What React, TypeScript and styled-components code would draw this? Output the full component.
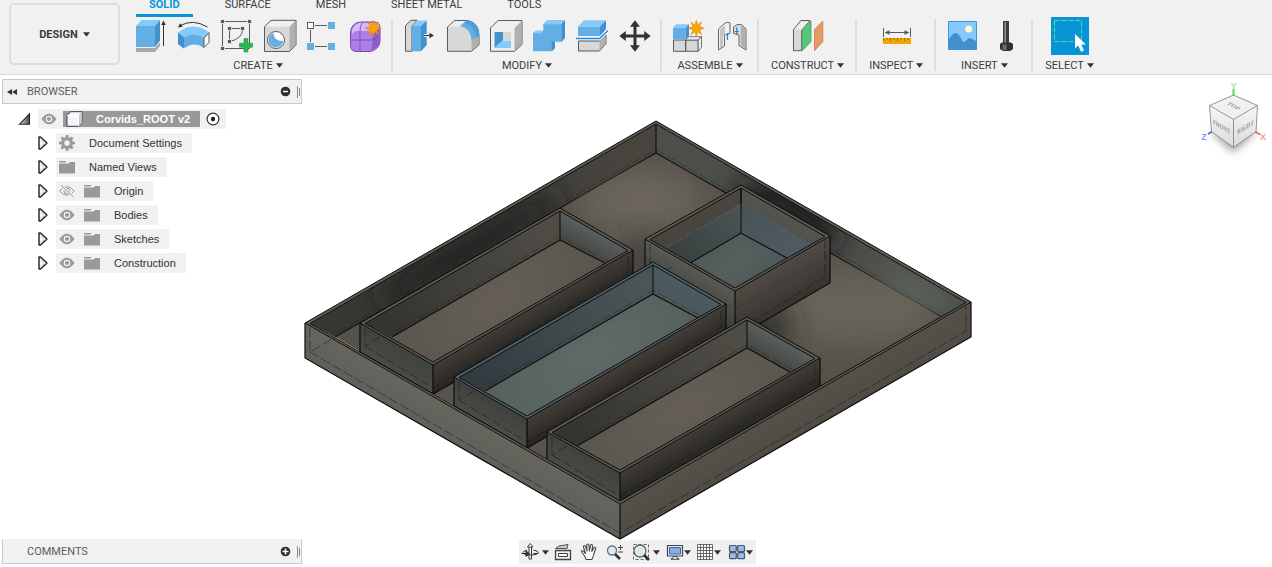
import React from 'react';
import styled, { createGlobalStyle } from 'styled-components';

const GlobalStyle = createGlobalStyle`
  *, *::before, *::after { box-sizing: border-box; }
  html, body { margin: 0; padding: 0; background: #fff; }
  body { font-family: Roboto, "Liberation Sans", sans-serif; font-size: 11px; color: #3c3c3c; }
  button { font: inherit; color: inherit; background: none; border: 0; padding: 0; margin: 0; cursor: pointer; }
  svg { display: block; flex: none; }
  ul { list-style: none; margin: 0; padding: 0; }
`;

/* ---------- layout ---------- */

const Page = styled.div`
  min-height: 100vh;
  display: flex;
  flex-direction: column;
`;

const Ribbon = styled.header`
  display: flex;
  background: #f1f1f1;
  border-bottom: 1px solid #d9d9d9;
`;

const WorkspaceButton = styled.button`
  display: flex;
  align-items: center;
  justify-content: center;
  gap: 5px;
  width: 111px;
  margin: 3px 4px 9px 9px;
  border: 2px solid #dddddd;
  border-radius: 5px;
  font-weight: 700;
`;

const RibbonBody = styled.div`
  flex: 1;
  min-width: 0;
`;

const Tabs = styled.nav`
  display: flex;
  gap: 19px;
  height: 17px;
  padding-left: 12px;
`;

const Tab = styled.button<{ $active?: boolean }>`
  height: 17px;
  padding: 0 13px 4px;
  line-height: 10px;
  white-space: nowrap;
  font-weight: ${p => (p.$active ? 700 : 400)};
  color: ${p => (p.$active ? '#0696d7' : '#3c3c3c')};
  border-bottom: 3px solid ${p => (p.$active ? '#0696d7' : 'transparent')};
`;

const ToolRow = styled.div`
  display: flex;
`;

const Divider = styled.span`
  width: 2px;
  margin: 2px 0 3px;
  background: #dddddd;
`;

const Group = styled.section`
  display: flex;
  flex-direction: column;
  align-items: center;
  padding: 0 4px 0 5px;
`;

const Tools = styled.div`
  display: flex;
`;

const ToolButton = styled.button`
  width: 43px;
  height: 38px;
`;

const GroupLabel = styled.button`
  display: flex;
  align-items: center;
  gap: 3px;
  height: 19px;
  padding: 1px 7px 0;
  white-space: nowrap;
`;

const Workspace = styled.main`
  flex: 1;
  display: grid;
  grid-template-columns: 304px minmax(0, 1fr) 300px;
`;

const SideColumn = styled.aside`
  display: flex;
  flex-direction: column;
  justify-content: space-between;
  padding: 4px 2px 3px;
`;

const Stage = styled.section`
  display: flex;
  flex-direction: column;
  align-items: center;
  justify-content: flex-end;
  padding-bottom: 3px;
`;

const CubeColumn = styled.aside`
  display: flex;
  justify-content: flex-end;
  align-items: flex-start;
  padding: 4px 4px 0 0;
`;

const ModelSvg = styled.svg`
  width: 100%;
  height: auto;
`;

/* ---------- panels ---------- */

const PanelBar = styled.div<{ $open?: boolean }>`
  display: flex;
  align-items: center;
  height: 25px;
  padding: 0 0 0 3px;
  background: #f1f1f1;
  border: 1px solid #c8c8c8;
  border-top-color: ${p => (p.$open ? '#c8c8c8' : '#f1f1f1')};
`;

const PanelTitle = styled.h2`
  flex: 1;
  margin: 0 0 0 21px;
  font-size: 11px;
  font-weight: 400;
  line-height: 23px;
  color: #5c5c5c;
`;

const CollapseButton = styled.button`
  width: 12px;
  height: 12px;
  & + ${PanelTitle} { margin-left: 9px; }
`;

const RoundButton = styled.button`
  width: 11px;
  height: 11px;
  margin-right: 6px;
`;

const Grip = styled.span`
  width: 4px;
  height: 12px;
  border-left: 1px solid #8a8a8a;
  display: flex;
  justify-content: center;
  align-items: center;
  &::after { content: ""; width: 1px; height: 8px; background: #8a8a8a; }
`;

const Tree = styled.ul`
  display: flex;
  flex-direction: column;
  gap: 4px;
  padding-top: 5px;
  font-family: "Liberation Sans", Arial, sans-serif;
  color: #333;
`;

const Row = styled.li<{ $level: number }>`
  display: flex;
  align-items: center;
  height: 20px;
  padding-left: ${p => 16 + p.$level * 18}px;
`;

const Expander = styled.button`
  width: 14px;
  height: 14px;
  margin-right: 6px;
`;

const RowBody = styled.div`
  display: flex;
  align-items: center;
  gap: 9px;
  height: 20px;
  padding: 0 10px 0 3px;
  background: #f1f1f1;
`;

const RowName = styled.span`
  padding-left: 5px;
  line-height: 20px;
  white-space: nowrap;
`;

const RootBody = styled(RowBody)`
  gap: 6px;
  padding-right: 6px;
`;

const RootName = styled.span`
  display: flex;
  align-items: center;
  gap: 13px;
  height: 16px;
  padding: 0 10px 0 3px;
  background: #989898;
  color: #fff;
  font-weight: 700;
  white-space: nowrap;
`;

const IconButton = styled.button`
  width: 16px;
  height: 16px;
`;

const NavBar = styled.div`
  display: flex;
  height: 24px;
  margin-right: 2px;
  background: #f0f0f0;
`;

const NavButton = styled.button<{ $width: number; $gap?: number }>`
  display: flex;
  align-items: center;
  justify-content: center;
  gap: ${p => p.$gap ?? 0}px;
  width: ${p => p.$width}px;
`;

/* ---------- small glyphs ---------- */

const Caret = () => (
  <svg width="7" height="5" viewBox="0 0 7 5" aria-hidden="true">
    <path d="M0 .3h7L3.500 4.700z" fill="#333" />
  </svg>
);

const Rewind = () => (
  <svg width="12" height="12" viewBox="0 0 12 12"><path d="M6 3v6L1 6zM11 3v6L6 6z" fill="#333" /></svg>
);

const Round = ({ plus }: { plus?: boolean }) => (
  <svg width="11" height="11" viewBox="0 0 11 11">
    <circle cx="5.500" cy="5.500" r="4.800" fill="#2e2e2e" />
    <path d={plus ? 'M2.500 5.500h6M5.500 2.500v6' : 'M3 5.500h5'} stroke="#fff" strokeWidth="1.500" />
  </svg>
);

const Closed = () => (
  <svg width="14" height="14" viewBox="0 0 14 14">
    <path d="M4.500 1h1.500l6.500 6-6.500 6h-1.500z" transform="translate(-1.500 0)" fill="#f4f4f4" stroke="#222" strokeWidth="1.400" strokeLinejoin="round" />
    <path d="M5 3.500l3.500 3.500-3.500 3.500" fill="none" stroke="#bbb" strokeWidth=".7" />
  </svg>
);

const Opened = () => (
  <svg width="14" height="14" viewBox="0 0 14 14">
    <defs>
      <linearGradient id="expander-shade" x1="0" x2="1"><stop offset="0" stopColor="#eee" /><stop offset="1" stopColor="#444" /></linearGradient>
    </defs>
    <path d="M1.500 12.300L11.500 1.800v10.500z" fill="url(#expander-shade)" stroke="#222" strokeWidth="1.100" />
  </svg>
);

const Eye = ({ off }: { off?: boolean }) => (
  <svg width="16" height="16" viewBox="0 0 16 16">
    {off ? (
      <g fill="none" stroke="#9a9a9a">
        <path d="M.8 8Q8 -.6 15.200 8 8 16.600 .8 8z" />
        <circle cx="8" cy="8" r="3" />
        <circle cx="8" cy="8" r="1" />
        <path d="M2.500 2.500l12 11.500" stroke="#f1f1f1" strokeWidth="2.500" />
        <path d="M2 2l12.500 12" />
      </g>
    ) : (
      <g>
        <path d="M.4 8Q8 -2.500 15.600 8 8 18.500 .4 8z" fill="#9a9a9a" />
        <circle cx="8" cy="8" r="2.700" fill="none" stroke="#f1f1f1" strokeWidth="1.200" />
      </g>
    )}
  </svg>
);

const Folder = () => (
  <svg width="16" height="16" viewBox="0 0 16 16">
    <path d="M0 4.500h9.500l1.500-1.500h5V14.500H0z" fill="#999" />
    <path d="M0 2h7.500l-1 1.500H0z" fill="#999" />
  </svg>
);

const Gear = () => (
  <svg width="16" height="16" viewBox="0 0 16 16">
    <circle cx="8" cy="8" r="4.300" fill="none" stroke="#9a9a9a" strokeWidth="3.200" />
    {[0, 45, 90, 135, 180, 225, 270, 315].map(a => (
      <path key={a} d="M6.400 3L6.800 0h2.400l.4 3z" fill="#9a9a9a" transform={`rotate(${a} 8 8)`} />
    ))}
  </svg>
);

const BodyCube = () => (
  <svg width="17" height="16" viewBox="0 0 17 16">
    <path d="M1 4.500L4.500 .7H16v10.800L12.500 15.300H1z" fill="#f4f6fa" stroke="#444" strokeLinejoin="round" />
    <path d="M12.500 4.500L16 .7v10.800l-3.500 3.800z" fill="#c3c8d0" />
    <path d="M1 4.500h11.500v10.500" fill="none" stroke="#fff" />
  </svg>
);

const ActiveDot = () => (
  <svg width="14" height="14" viewBox="0 0 14 14">
    <circle cx="7" cy="7" r="5.900" fill="#fff" stroke="#333" strokeWidth="1.200" />
    <circle cx="7" cy="7" r="2.200" fill="#222" />
  </svg>
);

/* ---------- ribbon icons, drawn in a 43 x 38 cell ---------- */

const B1 = '#64aee6';
const B2 = '#86c9fb';
const B3 = '#4390cc';
const G1 = '#d8d8d8';
const G2 = '#efefef';
const G3 = '#b0b0b0';
const LN = '#5a5a5a';

const Star = () => (
  <path
    fill="#f9a300"
    stroke="#e58a00"
    strokeWidth=".6"
    d="M29.300 3.300L30.700 8 34.600 5 32.500 9.500 37.300 11.300 32.500 13 34.600 17.500 30.700 14.700 29.300 19.300 27.900 14.700 23.900 17.500 26.100 13 21.300 11.300 26.100 9.500 23.900 5 27.900 8z"
  />
);

const icons: Record<string, React.ReactNode> = {
  Extrude: (
    <>
      <path d="M7 31h19l5-6v4l-5 6H7z" fill="#a9a9a9" />
      <path d="M7 9h19v21H7z" fill={B1} />
      <path d="M7 9l5.500-6H31l-5 6z" fill={B2} />
      <path d="M31 3v20.500L26 30V9z" fill={B3} />
      <path d="M34.500 29V6" stroke="#333" />
      <path d="M32.200 8l2.300-4.500L36.800 8z" fill="#333" />
    </>
  ),
  Revolve: (
    <>
      <path d="M6 15.700Q21.500 4 37 15.700L32 21 32 31Q22 24 12 31.500L6 27z" fill={B1} />
      <path d="M6 15.700Q21.500 4 37 15.700L32 21Q22 14.500 12 20.500z" fill={B2} />
      <path d="M6 15.700l6 4.800v11L6 27z" fill={B3} />
      <path d="M37 15.700v9.800L32 30.500V21z" fill="#fff" stroke={LN} />
      <path d="M8.500 8.500Q21 1.500 35.500 10" fill="none" stroke="#333" />
      <path d="M6 10.500l2-4.300 2.800 3.600z" fill="#333" />
    </>
  ),
  'Create Sketch': (
    <>
      <path d="M7.500 4.500h27v27h-27z" fill="none" stroke={LN} />
      <path d="M14.500 11.500h13.200q0 10.500-13.200 13z" fill="none" stroke={LN} />
      {[[7.500, 4.500], [34.500, 4.500], [7.500, 31.500], [14.500, 11.500], [27.500, 11.500], [14.500, 24.500]].map(([x, y]) => (
        <rect key={`${x}-${y}`} x={x - 2} y={y - 2} width="4" height="4" fill={LN} stroke="#f1f1f1" strokeWidth=".8" />
      ))}
      <path d="M29 21.500h4v4.700h4.500v4H33V35h-4v-4.800h-4.500v-4H29z" fill="#2db554" stroke="#1c9a44" strokeWidth=".6" />
    </>
  ),
  Hole: (
    <>
      <path d="M6.500 9.700L13 3.300h25v24.500l-6.500 6.700h-25z" fill={G1} stroke={LN} />
      <path d="M7.500 9.700L13.500 4H37l-5.500 5.700z" fill={G2} />
      <path d="M37.400 4v23.500L31.500 33.500V9.700z" fill={G3} />
      <circle cx="18" cy="23" r="8.500" fill="#fff" stroke={LN} />
      <path d="M15.500 16Q16 24.500 25.300 24A7.400 7.400 0 1 1 15.500 16z" fill={B1} />
    </>
  ),
  Pattern: (
    <>
      <path d="M14 8.500h12M14 29.500h12M9.500 13v12" stroke={LN} />
      <rect x="6.500" y="5.500" width="6" height="6" fill="#fff" stroke={LN} />
      <rect x="27" y="5" width="7" height="7" fill={B1} />
      <rect x="6" y="26" width="7" height="7" fill={B1} />
      <rect x="27" y="26" width="7" height="7" fill={B1} />
    </>
  ),
  'Create Form': (
    <>
      <path d="M6.500 15q0-4 3-7t7-3H30q6 0 6 6v13q0 4-3 7t-7 3.500H13q-6.500 0-6.500-6z" fill="#ac80e6" stroke="#7448ad" />
      <path d="M8 13q1-3 4-5.500T18 6h12q4.500 0 5 3-4 5-8 5H13q-3 0-5 3z" fill="#d6b8fb" />
      <path d="M35.200 11v13q0 4-3 6.500T27 33q1.500-3 1.500-8V15q4 0 6.700-4z" fill="#8d5cc9" />
      <path d="M18 6q-2 4-2 8v20M6.500 23H27q5 0 9-6" fill="none" stroke="#7448ad" strokeWidth=".8" />
      <Star />
    </>
  ),
  'Press Pull': (
    <>
      <path d="M7.500 8.500L13 3.300h6L14 9v25.300H7.500z" fill={G1} stroke={LN} />
      <path d="M14 9h9v25.300h-9z" fill={B1} />
      <path d="M14 9l5.300-5.500h9.400L23 9z" fill={B2} />
      <path d="M28.700 3.500V28L23 34.300V9z" fill={B3} />
      <path d="M26 18.500h7" stroke="#fff" strokeWidth="3" />
      <path d="M26 18.500h7" stroke="#333" strokeWidth="1.200" />
      <path d="M31.500 15.800l4.500 2.700-4.500 2.700z" fill="#333" />
    </>
  ),
  Fillet: (
    <>
      <path d="M6.500 10L13.500 3.500H27q11 3 11 15v9.300l-7.500 6.500h-24z" fill={G1} stroke={LN} />
      <path d="M7.500 9.800L14 4h11l-7 5.800z" fill={G2} />
      <path d="M30.500 23.500l7-5v9l-7 6.300z" fill={G3} />
      <path d="M19 9l7-5.700Q38 5 38.200 18.500L30.500 23.500Q30 11.500 19 9z" fill={B1} />
      <path d="M26 3.300Q38 5 38.200 18.500L35 20.500Q34 8.500 23 5.700z" fill={B3} opacity=".55" />
    </>
  ),
  Shell: (
    <>
      <path d="M6.500 11L14 3.500h24v24L30.500 34.300h-24z" fill={G2} stroke={LN} />
      <path d="M37.500 4v23.500l-7 6.300V11z" fill={G3} />
      <path d="M10 15h17v16H10z" fill="#fff" />
      <path d="M10.500 15H19v8.500L10.500 31z" fill={B3} />
      <path d="M10.500 31l8-7.500H27V31z" fill={B2} />
      <path d="M19 15h8v8.500h-8z" fill={G1} />
    </>
  ),
  Combine: (
    <>
      <path d="M6 16.300l3-2.600h7.300V7.300l4-4H38v17.400l-3.300 4H28V31l-3.300 3.300H6z" fill={B1} />
      <path d="M6 16.300l3-2.600h7.300l-2 2.600zM16.300 7.300l4-4H38l-3.500 4z" fill={B2} />
      <path d="M38 3.300v17.400l-3.300 4V7.300zM28 24.700V31l-3.300 3.300v-9.600z" fill={B3} />
    </>
  ),
  'Split Body': (
    <>
      <path d="M8.500 24h21l6.500-6v8.500L29.500 34h-21z" fill={G1} stroke={LN} />
      <path d="M35.500 18.500v8l-6 7V24z" fill={G3} />
      <path d="M8 9.500h22V19H8z" fill={B1} />
      <path d="M8 9.500l6-6.200h22l-6 6.200z" fill={B2} />
      <path d="M36 3.300V12l-6 7V9.500z" fill={B3} />
      <path d="M6 21.500h23.500l8.500-8" fill="none" stroke="#fff" strokeWidth="3" />
      <path d="M6 21.500h23.500l8.500-8" fill="none" stroke="#148be0" strokeWidth="1.300" />
    </>
  ),
  Move: (
    <path
      fill="#333"
      d="M22 3.300l5 6.500h-3.500v7.700h7.700V14l6.500 5-6.500 5v-3.500h-7.700v7.700H27l-5 6.500-5-6.500h3.500v-7.700h-7.700V24l-6.500-5 6.500-5v3.500h7.700V9.800H17z"
    />
  ),
  'New Component': (
    <>
      <path d="M6.500 23h12.200v11.300H6.500zM18.700 23h12.500v11.300H18.700z" fill={G1} stroke={LN} />
      <path d="M18.700 23l3-3.300h12.600L31.200 23zM34.500 19.700v10.500l-3.300 4V23z" fill={G2} stroke={LN} strokeWidth=".8" />
      <path d="M6 10.700h12.700v11.600H6z" fill={B1} />
      <path d="M6 10.700l3-3.400h13l-3.300 3.400z" fill={B2} />
      <path d="M22 7.300V19l-3.300 3.300V10.700z" fill={B3} />
      <Star />
    </>
  ),
  Joint: (
    <>
      <path d="M8.500 12L15 6q3-1.500 5 0v10.500l-5.500 1.500v11L8.500 33z" fill={G2} stroke="#666" />
      <path d="M10 12.500l5-4.500v9.500l-2 1.500v10l-3 2.500z" fill="#c4c4c4" />
      <path d="M23.500 10q3-3.500 7.500-2.500l5 4.500v21l-7-4.500V18l-5.500-1.500z" fill={G1} stroke="#666" />
      <path d="M31 8.500l4.500 4v19l-4.500-3z" fill={G3} />
      <path d="M26.700 10.500v7M24.700 14.500h4M17.500 16v7" stroke="#148be0" strokeWidth="1.200" />
    </>
  ),
  'Offset Plane': (
    <>
      <path d="M7.500 12.500L15 3.500h9l-8.300 9.500v20.700H7.500z" fill={G1} stroke={LN} />
      <path d="M8.300 12.500L15.300 4.200h7.500L15.500 12.500z" fill={G2} />
      <path d="M16.300 13.300L25 4v20.500l-8.700 9.200z" fill="#58c57c" stroke="#38a75e" strokeWidth=".8" />
      <path d="M28.500 12.500L36.800 4v20.500l-8.300 9.200z" fill="#e79a66" stroke="#c97a45" strokeWidth=".8" />
    </>
  ),
  Measure: (
    <>
      <path d="M8.500 11v9M35.500 11v9M11 15.500h22" stroke={LN} />
      <path d="M9.500 15.500l5-2.300v4.600zM34.500 15.500l-5-2.300v4.600z" fill={LN} />
      <path d="M8 21h28v6H8z" fill="#f9a300" />
      <path d="M8.500 21v3M12 21v2M15.500 21v3M19 21v2M22.500 21v3M26 21v2M29.500 21v3M33 21v2" stroke="#8a6a20" />
    </>
  ),
  Canvas: (
    <>
      <path d="M7.500 4.500h28v28h-28z" fill={B2} stroke="#3c93d3" />
      <circle cx="27.700" cy="12" r="3.500" fill="#fffbd0" />
      <path d="M8 22Q12 15.500 15 16t7 9q1 1 3-1.500t3.500-2.500T35 24v8H8z" fill={B3} />
    </>
  ),
  Fastener: (
    <>
      <path d="M19 4h6v22h-6z" fill="#3c3c3c" />
      <path d="M20.500 5h1.500v21h-1.500z" fill="#909090" />
      <path d="M16 27l2-1.500h9l2 1.500v5l-3 2h-7l-3-2z" fill="#303030" />
      <path d="M18.500 27.500h4v5.500h-4z" fill="#6c6c6c" />
    </>
  ),
  Select: (
    <>
      <path d="M3 0h38v38H3z" fill="#0696d7" />
      <path d="M6.500 3.500h27v21h-27z" fill="none" stroke="#62dc8c" strokeDasharray="5 2" />
      <path d="M27 17v14.500l3.300-3 2.700 6.300 3-1.300-2.700-6h4.500z" fill="#fff" />
    </>
  ),
};

const groups: { label: string; tools: string[] }[] = [
  { label: 'CREATE', tools: ['Extrude', 'Revolve', 'Create Sketch', 'Hole', 'Pattern', 'Create Form'] },
  { label: 'MODIFY', tools: ['Press Pull', 'Fillet', 'Shell', 'Combine', 'Split Body', 'Move'] },
  { label: 'ASSEMBLE', tools: ['New Component', 'Joint'] },
  { label: 'CONSTRUCT', tools: ['Offset Plane'] },
  { label: 'INSPECT', tools: ['Measure'] },
  { label: 'INSERT', tools: ['Canvas', 'Fastener'] },
  { label: 'SELECT', tools: ['Select'] },
];

/* ---------- navigation icons, 18 x 18 ---------- */

const Nav = ({ children }: { children: React.ReactNode }) => (
  <svg width="18" height="18" viewBox="0 0 18 18" aria-hidden="true">{children}</svg>
);

const navItems: { name: string; width: number; gap?: number; caret?: boolean; icon: React.ReactNode }[] = [
  {
    name: 'Orbit', width: 32, gap: 3, caret: true,
    icon: (
      <g fill="none" stroke="#333">
        <path d="M8 4v12h2.500V4" fill="#fff" />
        <path d="M9.200 .5L6.500 4h5.500z" fill="#fff" strokeWidth=".9" />
        <path d="M12.500 7q4.500 .8 4.500 2.500 0 2.500-7.500 2.500T2 9.500q0-1.300 4-2.300" />
        <path d="M.5 10.500h5M17.500 10.500h-5" />
        <path d="M5 8l3.500 2.700L5 13.500z" fill="#333" />
      </g>
    ),
  },
  {
    name: 'Look At', width: 24,
    icon: (
      <g fill="#fff" stroke="#444">
        <path d="M1.500 7.500h15v9h-15z" fill="#e9eef5" strokeWidth="1.300" />
        <path d="M4.500 10.500h9v3h-9z" />
        <path d="M1.500 5.500L5 3l9-1.500-1 4z" fill="#ccc" strokeWidth=".9" />
      </g>
    ),
  },
  {
    name: 'Pan', width: 28,
    icon: (
      <path
        d="M6 16.500Q5.500 14 3.500 11.500 1 8.500 1.500 8q1-.8 2.500 1l1.500 1.500L3.500 4q-.2-1.300.7-1.500t1.400 1.200L7 8 6.800 2.200Q6.800 1 7.800 1T9 2.200L9.400 8l1.200-5.500q.3-1.200 1.200-1t.8 1.400L11.800 8.500l2-3.500q.8-1 1.500-.6t.3 1.600L13.800 11q-.5 3-2 5.500z"
        fill="#fff" stroke="#444" strokeWidth="1.100" strokeLinejoin="round"
      />
    ),
  },
  {
    name: 'Zoom', width: 25,
    icon: (
      <g fill="none" stroke="#444">
        <circle cx="6" cy="7.500" r="4.500" fill="#dcebf5" stroke="#65717c" strokeWidth="1.300" />
        <path d="M9 11l5 5" strokeWidth="2.600" stroke="#333" />
        <path d="M12 4.500h5M14.500 2v5M12 9h5" />
      </g>
    ),
  },
  {
    name: 'Fit', width: 36, gap: 3, caret: true,
    icon: (
      <g fill="none" stroke="#555">
        <path d="M1.500 1.500h15v15h-15z" strokeDasharray="3 2" strokeWidth=".9" />
        <circle cx="8" cy="8" r="6" fill="#dcebe8" stroke="#666" strokeWidth="1.300" />
        <path d="M12 12l5 5" strokeWidth="2.800" stroke="#333" />
      </g>
    ),
  },
  {
    name: 'Display Settings', width: 29, caret: true,
    icon: (
      <g stroke="#3b4552">
        <path d="M1.500 2.500h15v10.500h-15z" fill="#eee" strokeWidth="1.200" />
        <path d="M3.500 4.500h11v6.500h-11z" fill="#86aee6" stroke="#3c64a6" />
        <path d="M7 13.500h4v2h2v1H5v-1h2z" fill="#ddd" strokeWidth=".8" />
      </g>
    ),
  },
  {
    name: 'Grid and Snaps', width: 32, caret: true,
    icon: (
      <g stroke="#666" fill="#fff">
        <path d="M1.500 1.500h15v15h-15z" />
        <path d="M4.500 1.500v15M7.500 1.500v15M10.500 1.500v15M13.500 1.500v15M1.500 4.500h15M1.500 7.500h15M1.500 10.500h15M1.500 13.500h15" />
      </g>
    ),
  },
  {
    name: 'Viewports', width: 31, caret: true,
    icon: (
      <g fill="#9cbce6" stroke="#47586d" strokeWidth="1.200">
        <rect x="1.500" y="2.500" width="6.800" height="6" rx="1" />
        <rect x="9.700" y="2.500" width="6.800" height="6" rx="1" />
        <rect x="1.500" y="9.700" width="6.800" height="6" rx="1" />
        <rect x="9.700" y="9.700" width="6.800" height="6" rx="1" />
      </g>
    ),
  },
];

/* ---------- isometric model ---------- */

type Pt = [number, number];
const poly = (...pts: Pt[]) => pts.map(p => p.join(',')).join(' ');
const down = (p: Pt, d: number): Pt => [p[0], p[1] + d];
const EDGE = '#0d0d0c';

interface TrayProps {
  id: string;
  back: Pt; right: Pt; front: Pt; left: Pt;
  height: number;
  floorBack: Pt; floorLeft: Pt; floorRight: Pt;
  colors: {
    rim: string;
    wallL: [string, string]; wallR: [string, string]; floor: [string, string];
    faceL: [string, string]; faceR: [string, string];
  };
  children?: React.ReactNode;
}

const Fade = ({ id, from, to, c }: { id: string; from: Pt; to: Pt; c: [string, string] }) => (
  <linearGradient id={id} gradientUnits="userSpaceOnUse" x1={from[0]} y1={from[1]} x2={to[0]} y2={to[1]}>
    <stop offset="0" stopColor={c[0]} />
    <stop offset="1" stopColor={c[1]} />
  </linearGradient>
);

const Tray = ({ id, back, right, front, left, height, floorBack, floorLeft, floorRight, colors, children }: TrayProps) => {
  const b: Pt = [back[0], back[1] + 3];
  const r: Pt = [right[0] - 5, right[1] + 0.500];
  const f: Pt = [front[0], front[1] - 3];
  const l: Pt = [left[0] + 5, left[1] + 0.500];
  const depth = floorBack[1] - b[1];
  const cx = (floorLeft[0] + floorRight[0] + floorBack[0] + f[0]) / 4;
  const cy = (floorLeft[1] + floorRight[1] + floorBack[1] + f[1]) / 4;
  const ring = `M${poly(back, right, front, left)}ZM${poly(b, r, f, l)}Z`;
  return (
    <g>
      <defs>
        <Fade id={`${id}-wall-l`} from={[b[0] - 20, b[1] + 12]} to={[l[0] + 30, l[1] + depth / 2]} c={colors.wallL} />
        <Fade id={`${id}-wall-r`} from={b} to={[b[0] - depth * 0.430, b[1] + depth * 0.750]} c={colors.wallR} />
        <Fade id={`${id}-face-l`} from={front} to={[front[0] - height * 0.430, front[1] + height * 0.750]} c={colors.faceL} />
        <Fade id={`${id}-face-r`} from={front} to={[front[0] + height * 0.430, front[1] + height * 0.750]} c={colors.faceR} />
        <radialGradient
          id={`${id}-floor`} gradientUnits="userSpaceOnUse" cx="0" cy="0" r="1"
          gradientTransform={`translate(${cx} ${cy}) rotate(-30) scale(${(right[0] - left[0]) / 1.900} ${(front[1] - back[1]) / 2.400})`}
        >
          <stop offset="0" stopColor={colors.floor[0]} />
          <stop offset="1" stopColor={colors.floor[1]} />
        </radialGradient>
      </defs>
      <polygon points={poly(l, b, floorBack, floorLeft)} fill={`url(#${id}-wall-l)`} />
      <polygon points={poly(b, r, floorRight, floorBack)} fill={`url(#${id}-wall-r)`} />
      <polygon points={poly(floorBack, floorRight, f, floorLeft)} fill={`url(#${id}-floor)`} />
      <path d={`M${floorLeft}L${floorBack}L${floorRight}M${b}L${floorBack}`} fill="none" stroke={EDGE} strokeWidth="1.100" />
      <path
        d={`M${floorLeft[0] + 4},${floorLeft[1] - 6}L${floorBack[0]},${floorBack[1] - 3.500}L${floorRight[0] + 3},${floorRight[1] - 2}`}
        fill="none" stroke="#1c1c1a" strokeOpacity=".4" strokeDasharray="10 3"
      />
      {children}
      <polygon points={poly(left, front, down(front, height), down(left, height))} fill={`url(#${id}-face-l)`} />
      <polygon points={poly(front, right, down(right, height), down(front, height))} fill={`url(#${id}-face-r)`} />
      <g stroke="#161615" strokeOpacity=".5" strokeDasharray="10 3" fill="none">
        <path d={`M${l[0]},${l[1] + 4}V${left[1] + height - 6}l22,-13`} />
        <path d={`M${l[0]},${left[1] + height - 6}L${front[0]},${front[1] + height - 6}L${r[0]},${right[1] + height - 6}V${r[1] + 4}`} />
      </g>
      <path d={ring} fillRule="evenodd" fill={colors.rim} stroke={EDGE} strokeWidth="1" />
      <path
        d={`M${left}V${left[1] + height}L${down(front, height)}L${down(right, height)}V${right[1]}M${front}V${front[1] + height}`}
        fill="none" stroke={EDGE} strokeWidth="1.200"
      />
    </g>
  );
};

const dark = {
  rim: '#5b5951',
  wallL: ['#4f4c46', '#343430'] as [string, string],
  wallR: ['#5a5f5d', '#444642'] as [string, string],
  floor: ['#655f57', '#57534b'] as [string, string],
  faceL: ['#40423e', '#4a4b47'] as [string, string],
  faceR: ['#403c37', '#262522'] as [string, string],
};

const Model = () => (
  <ModelSvg viewBox="304 120 668 420" role="img" aria-label="Corvids_ROOT tray assembly">
    <defs>
      <filter id="soft" x="-50%" y="-100%" width="200%" height="300%"><feGaussianBlur stdDeviation="14" /></filter>
      <clipPath id="wallLeft"><polygon points="309,324 656,123 656,153 335,337" /></clipPath>
      <clipPath id="wallRight"><polygon points="656,123 967,302 942,317 656,153" /></clipPath>
      <clipPath id="ground"><polygon points="656,153 942,317 620,501 335,337" /></clipPath>
      <linearGradient id="blueL" gradientUnits="userSpaceOnUse" x1="741" y1="210" x2="680" y2="262">
        <stop offset="0" stopColor="#4b5355" /><stop offset="1" stopColor="#38413f" />
      </linearGradient>
      <linearGradient id="blueR" gradientUnits="userSpaceOnUse" x1="741" y1="204" x2="790" y2="262">
        <stop offset="0" stopColor="#485255" /><stop offset="1" stopColor="#4e5c62" />
      </linearGradient>
    </defs>
    <Tray
      id="base" back={[656, 121]} right={[971, 302]} front={[620, 504]} left={[305, 323]} height={35}
      floorBack={[656, 153]} floorLeft={[335, 337]} floorRight={[942, 317]}
      colors={{
        rim: '#5d5b52', wallL: ['#48453f', '#363632'], wallR: ['#4c4f4b', '#4c4e4a'],
        floor: ['#5a564f', '#56524a'], faceL: ['#66665f', '#60605a'], faceR: ['#555149', '#504c45'],
      }}
    >
      <g clipPath="url(#wallLeft)">
        <ellipse cx="470" cy="248" rx="110" ry="14" fill="#1d1c1a" filter="url(#soft)" transform="rotate(-30 470 248)" />
      </g>
      <g clipPath="url(#wallRight)">
        <ellipse cx="790" cy="214" rx="60" ry="18" fill="#161614" filter="url(#soft)" transform="rotate(30 790 214)" />
        <ellipse cx="915" cy="293" rx="40" ry="14" fill="#60655f" filter="url(#soft)" transform="rotate(30 915 293)" />
      </g>
      <g clipPath="url(#ground)">
        <ellipse cx="640" cy="200" rx="60" ry="30" fill="#6a655b" filter="url(#soft)" />
        <ellipse cx="858" cy="308" rx="80" ry="36" fill="#68645a" filter="url(#soft)" />
        <ellipse cx="730" cy="350" rx="70" ry="20" fill="#2c2a27" filter="url(#soft)" transform="rotate(-30 730 350)" />
        <ellipse cx="642" cy="262" rx="12" ry="26" fill="#3b3833" filter="url(#soft)" />
      </g>
      <Tray
        id="a" back={[560, 208]} right={[633, 250]} front={[433, 365]} left={[360, 323]} height={29}
        floorBack={[560, 240]} floorLeft={[392, 337]} floorRight={[605, 263]} colors={dark}
      />
      <Tray
        id="d" back={[741, 185]} right={[830, 236]} front={[735, 291]} left={[645, 239]} height={47}
        floorBack={[741, 233]} floorLeft={[690, 263]} floorRight={[787, 258]}
        colors={{
          rim: '#5d5a52', wallL: ['#4a453e', '#48443e'], wallR: ['#55554f', '#4a4a45'],
          floor: ['#566160', '#485352'], faceL: ['#5a5a54', '#3a3b38'], faceR: ['#4f4a43', '#36332f'],
        }}
      >
        <polygon points="741,204 666,248 690,263 741,233" fill="url(#blueL)" />
        <polygon points="741,204 812,245 787,258 741,233" fill="url(#blueR)" />
        <path d="M666 248L741 204L812 245" fill="none" stroke="#50697a" strokeOpacity=".6" strokeDasharray="9 2" />
        <path d="M690 263L741 233L787 258M741 188V233" fill="none" stroke={EDGE} />
      </Tray>
      <path d="M645 258L735 309L830 255" fill="none" stroke="#2b3a44" strokeOpacity=".6" strokeDasharray="10 3" />
      <Tray
        id="b" back={[653, 262]} right={[726, 304]} front={[527, 419]} left={[454, 377]} height={29}
        floorBack={[653, 294]} floorLeft={[485, 391]} floorRight={[698, 318]}
        colors={{
          rim: '#4f6069', wallL: ['#4b5558', '#323c40'], wallR: ['#4c5b61', '#4a575b'],
          floor: ['#616a66', '#535e5c'], faceL: ['#40413d', '#4b4b47'], faceR: ['#443e37', '#262422'],
        }}
      />
      <Tray
        id="c" back={[747, 317]} right={[820, 358]} front={[620, 473]} left={[547, 432]} height={29}
        floorBack={[747, 348]} floorLeft={[577, 446]} floorRight={[790, 372]} colors={dark}
      />
    </Tray>
  </ModelSvg>
);

const ViewCube = () => (
  <svg width="68" height="80" viewBox="1200 79 68 80" role="img" aria-label="View cube">
    <defs>
      <filter id="cube-blur" x="-50%" y="-50%" width="200%" height="200%"><feGaussianBlur stdDeviation="4" /></filter>
      <linearGradient id="cube-side" x1="0" y1="0" x2="0" y2="1"><stop offset="0" stopColor="#f8f8f8" /><stop offset="1" stopColor="#dadada" /></linearGradient>
    </defs>
    <path d="M1212 132L1233 152L1256 132L1233 124z" fill="#999" filter="url(#cube-blur)" />
    <path d="M1233.500 96V89" stroke="#4be04b" strokeWidth="2" />
    <path d="M1213 131l-5 3" stroke="#5566e6" strokeWidth="2" />
    <path d="M1254 131l6 3.500" stroke="#e86a6a" strokeWidth="2" />
    <path d="M1233.500 95L1257.500 105.500L1233.500 119.500L1209.500 105.500z" fill="#f0f0f0" />
    <path d="M1209.500 105.500L1233.500 119.500V147.500L1211.500 131.500z" fill="url(#cube-side)" />
    <path d="M1257.500 105.500L1233.500 119.500V147.500L1256 131.500z" fill="url(#cube-side)" />
    <path d="M1209.500 105.500L1233.500 95L1257.500 105.500L1256 131.500L1233.500 147.500L1211.500 131.500zL1233.500 119.500L1257.500 105.500M1233.500 119.500V147.500" fill="none" stroke="#8a8a8a" strokeWidth=".9" />
    <g fontFamily="Liberation Serif, serif" fontSize="7" fontWeight="700" fill="#8e9297" textAnchor="middle">
      <text transform="matrix(.8 .45 -.7 .45 1232 107)">TOP</text>
      <text transform="matrix(.7 .42 0 1 1221.500 129)">FRONT</text>
      <text transform="matrix(.7 -.42 0 1 1245.500 129.500)">RIGHT</text>
    </g>
    <g fontFamily="Liberation Sans, sans-serif" fontSize="9" fontWeight="700" textAnchor="middle">
      <text x="1233.500" y="89" fill="#8ff08f">Y</text>
      <text x="1204" y="140" fill="#8a96f0">Z</text>
      <text x="1263" y="140" fill="#f29a9a">X</text>
    </g>
  </svg>
);

/* ---------- browser tree ---------- */

const rows: { name: string; icon: 'gear' | 'folder'; visible?: boolean }[] = [
  { name: 'Document Settings', icon: 'gear' },
  { name: 'Named Views', icon: 'folder' },
  { name: 'Origin', icon: 'folder', visible: false },
  { name: 'Bodies', icon: 'folder', visible: true },
  { name: 'Sketches', icon: 'folder', visible: true },
  { name: 'Construction', icon: 'folder', visible: true },
];

export default function App() {
  return (
    <Page>
      <GlobalStyle />
      <Ribbon>
        <WorkspaceButton>DESIGN <Caret /></WorkspaceButton>
        <RibbonBody>
          <Tabs aria-label="Workspace tabs">
            {['SOLID', 'SURFACE', 'MESH', 'SHEET METAL', 'TOOLS'].map((t, i) => (
              <Tab key={t} $active={i === 0}>{t}</Tab>
            ))}
          </Tabs>
          <ToolRow>
            {groups.map((g, i) => (
              <React.Fragment key={g.label}>
                {i > 0 && <Divider />}
                <Group>
                  <Tools>
                    {g.tools.map(t => (
                      <ToolButton key={t} aria-label={t}>
                        <svg width="43" height="38" viewBox="0 0 43 38">{icons[t]}</svg>
                      </ToolButton>
                    ))}
                  </Tools>
                  <GroupLabel>{g.label}<Caret /></GroupLabel>
                </Group>
              </React.Fragment>
            ))}
          </ToolRow>
        </RibbonBody>
      </Ribbon>

      <Workspace>
        <SideColumn>
          <section>
            <PanelBar $open>
              <CollapseButton aria-label="Collapse browser"><Rewind /></CollapseButton>
              <PanelTitle>BROWSER</PanelTitle>
              <RoundButton aria-label="Hide browser"><Round /></RoundButton>
              <Grip />
            </PanelBar>
            <Tree>
              <Row $level={0}>
                <Expander aria-label="Collapse root"><Opened /></Expander>
                <RootBody>
                  <IconButton aria-label="Toggle visibility of root"><Eye /></IconButton>
                  <RootName><BodyCube />Corvids_ROOT v2</RootName>
                  <ActiveDot />
                </RootBody>
              </Row>
              {rows.map(r => (
                <Row key={r.name} $level={1}>
                  <Expander aria-label={`Expand ${r.name}`}><Closed /></Expander>
                  <RowBody>
                    {r.visible !== undefined && (
                      <IconButton aria-label={`Toggle visibility of ${r.name}`}><Eye off={!r.visible} /></IconButton>
                    )}
                    {r.icon === 'gear' ? <Gear /> : <Folder />}
                    <RowName>{r.name}</RowName>
                  </RowBody>
                </Row>
              ))}
            </Tree>
          </section>
          <PanelBar>
            <PanelTitle>COMMENTS</PanelTitle>
            <RoundButton aria-label="Show comments"><Round plus /></RoundButton>
            <Grip />
          </PanelBar>
        </SideColumn>

        <Stage>
          <Model />
          <NavBar>
            {navItems.map(n => (
              <NavButton key={n.name} aria-label={n.name} $width={n.width} $gap={n.gap}>
                <Nav>{n.icon}</Nav>
                {n.caret && <Caret />}
              </NavButton>
            ))}
          </NavBar>
        </Stage>

        <CubeColumn><ViewCube /></CubeColumn>
      </Workspace>
    </Page>
  );
}
